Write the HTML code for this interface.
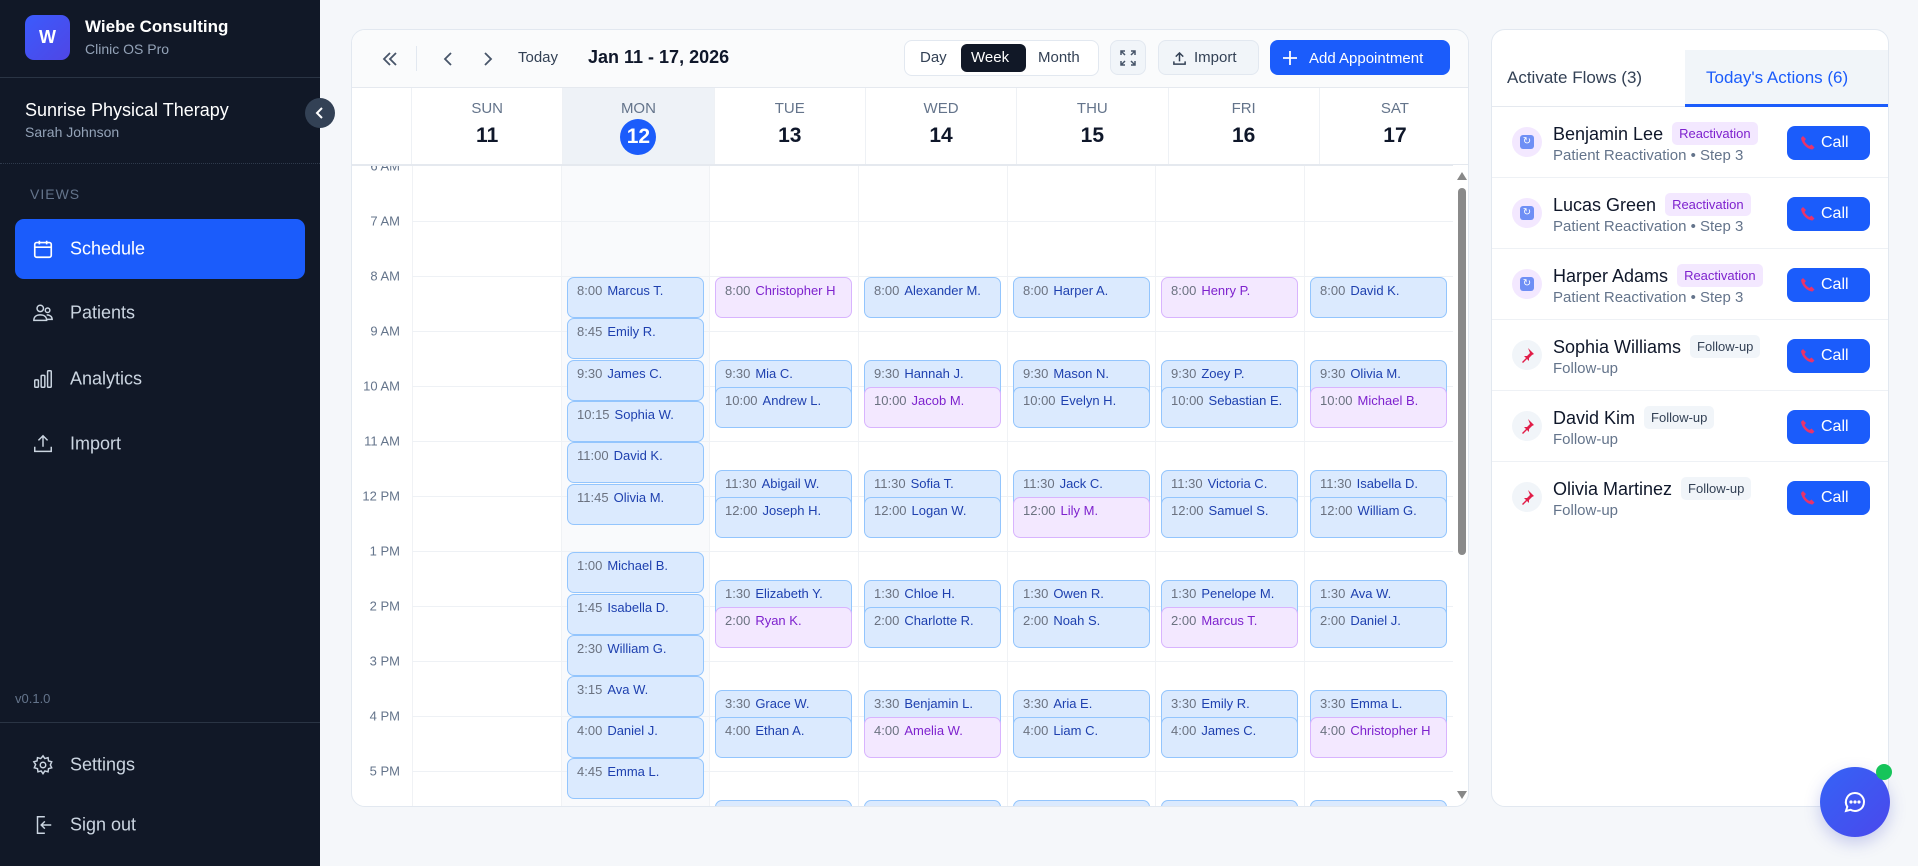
<!DOCTYPE html>
<html><head><meta charset="utf-8">
<style>
*{box-sizing:border-box;margin:0;padding:0}
body{width:1918px;height:866px;overflow:hidden;background:#f5f7fa;font-family:"Liberation Sans",sans-serif;position:relative}
.abs{position:absolute}
#sb{position:absolute;left:0;top:0;width:320px;height:866px;background:#111827}
.nav{position:absolute;left:15px;width:290px;height:60px;border-radius:9px;color:#cbd5e1;font-size:18px}
.nav svg{position:absolute;left:17px;top:50%;transform:translateY(-50%)}
.nav span{position:absolute;left:55px;top:50%;transform:translateY(-50%)}
#cal{position:absolute;left:351px;top:29px;width:1118px;height:778px;background:#fff;border:1px solid #e2e8f0;border-radius:14px;overflow:hidden}
#tb{position:absolute;left:0;top:0;width:100%;height:58px;background:#fafbfc;border-bottom:1px solid #e5e9ef}
.hd{position:absolute;top:58px;height:77px;width:151.3px;text-align:center;border-left:1px solid #eef1f5}
.hd .d{position:absolute;left:0;right:0;top:12px;font-size:15px;color:#64748b}
.hd .n{position:absolute;left:0;right:0;top:36px;font-size:21px;font-weight:bold;color:#0f172a}
#grid{position:absolute;left:0;top:135px;width:1101px;height:643px;overflow:hidden;border-top:1px solid #e5e9ef}
.hl{position:absolute;left:60px;right:0;height:1px;background:#eef1f5}
.vl{position:absolute;top:0;bottom:0;width:1px;background:#f0f2f5}
.tl{position:absolute;left:0;width:48px;text-align:right;font-size:13px;color:#64748b;transform:translateY(-50%)}
.a{position:absolute;width:137px;height:41px;background:#dbeafe;border:1.5px solid #93c5fd;border-radius:7px;padding:5px 0 0 9px;font-size:13px;white-space:nowrap;overflow:hidden;color:#1e40af}
.a i{font-style:normal;color:#6b7280;margin-right:5px}
.a.p{background:#f3e8ff;border-color:#d8b4fe;color:#7e22ce}
.btn{position:absolute;top:10px;height:35px;border-radius:8px;font-size:15px}
#rp{position:absolute;left:1491px;top:29px;width:398px;height:778px;background:#fff;border:1px solid #e2e8f0;border-radius:14px;overflow:hidden}
.row{position:absolute;left:0;width:398px;height:71px;border-bottom:1px solid #eef1f5}
.ic{position:absolute;left:20px;top:20px;width:30px;height:30px;border-radius:50%;background:#f3e8ff}
.nm{position:absolute;left:61px;top:15px;font-size:18px;color:#0f172a;white-space:nowrap}
.bd{display:inline-block;vertical-align:2px;margin-left:9px;font-size:13px;padding:4px 7px;border-radius:5px;background:#f3e8ff;color:#7e22ce}
.bd.f{background:#f1f5f9;color:#334155}
.sub{position:absolute;left:61px;top:40px;font-size:15px;color:#64748b;white-space:nowrap}
.call{position:absolute;left:295px;top:19px;width:83px;height:34px;border-radius:8px;background:#1b5cfb;color:#fff;font-size:16px}
.call span{position:absolute;left:34px;top:8px}
.call svg{position:absolute;left:13px;top:9px}
</style></head><body>

<div id="sb">
  <div class="abs" style="left:25px;top:15px;width:45px;height:45px;border-radius:9px;background:linear-gradient(135deg,#3b5bfd,#4f46e5);color:#fff;font-weight:bold;font-size:18px;text-align:center;line-height:45px">W</div>
  <div class="abs" style="left:85px;top:17px;color:#fff;font-size:17px;font-weight:bold">Wiebe Consulting</div>
  <div class="abs" style="left:85px;top:41px;color:#94a3b8;font-size:14px">Clinic OS Pro</div>
  <div class="abs" style="left:0;top:77px;width:320px;height:1px;background:#2a3444"></div>
  <div class="abs" style="left:25px;top:100px;color:#fff;font-size:18px">Sunrise Physical Therapy</div>
  <div class="abs" style="left:25px;top:124px;color:#94a3b8;font-size:14px">Sarah Johnson</div>
  <div class="abs" style="left:0;top:163px;width:320px;border-top:1px dotted #2f3a4c"></div>
  <div class="abs" style="left:30px;top:186px;color:#64748b;font-size:14px;letter-spacing:1px">VIEWS</div>
  <div class="nav" style="top:219px;background:#1b5cfb;color:#fff">
    <svg width="22" height="22" viewBox="0 0 24 24" fill="none" stroke="#fff" stroke-width="1.8"><rect x="3" y="5" width="18" height="16" rx="2"/><path d="M3 10h18M8 3v4M16 3v4"/></svg><span>Schedule</span></div>
  <div class="nav" style="top:283px">
    <svg width="22" height="22" viewBox="0 0 24 24" fill="none" stroke="#cbd5e1" stroke-width="1.6"><circle cx="9" cy="7" r="3.5"/><circle cx="17" cy="9" r="2.5"/><path d="M2 20c0-4 3-6 7-6s7 2 7 6zM16 14c3 0 6 1.5 6 5h-6"/></svg><span>Patients</span></div>
  <div class="nav" style="top:349px">
    <svg width="22" height="22" viewBox="0 0 24 24" fill="none" stroke="#cbd5e1" stroke-width="1.6"><rect x="3" y="13" width="4" height="8" rx="1"/><rect x="10" y="8" width="4" height="13" rx="1"/><rect x="17" y="3" width="4" height="18" rx="1"/></svg><span>Analytics</span></div>
  <div class="nav" style="top:414px">
    <svg width="22" height="22" viewBox="0 0 24 24" fill="none" stroke="#cbd5e1" stroke-width="1.6"><path d="M12 15V3M7 8l5-5 5 5M3 15v5h18v-5"/></svg><span>Import</span></div>
  <div class="abs" style="left:15px;top:691px;color:#64748b;font-size:13px">v0.1.0</div>
  <div class="abs" style="left:0;top:722px;width:320px;height:1px;background:#2a3444"></div>
  <div class="nav" style="top:735px">
    <svg width="22" height="22" viewBox="0 0 24 24" fill="none" stroke="#cbd5e1" stroke-width="1.6"><circle cx="12" cy="12" r="3"/><path d="M12 2l2 3 3.5-1 .5 3.5 3.5 1-1.5 3.5 1.5 3-3.5 1-.5 3.5-3.5-1-2 3-2-3-3.5 1-.5-3.5-3.5-1 1.5-3.5L2 8.5l3.5-1L6 4l3.5 1z"/></svg><span>Settings</span></div>
  <div class="nav" style="top:795px">
    <svg width="22" height="22" viewBox="0 0 24 24" fill="none" stroke="#cbd5e1" stroke-width="1.6"><path d="M14 3H6v18h8M10 12h11M14 8l-4 4 4 4"/></svg><span>Sign out</span></div>
</div>
<div class="abs" style="left:305px;top:98px;width:30px;height:30px;border-radius:50%;background:#334155;z-index:5">
  <svg width="30" height="30" viewBox="0 0 30 30" fill="none" stroke="#fff" stroke-width="2"><path d="M17 10l-5 5 5 5"/></svg></div>

<div id="cal">
  <div id="tb">
    <svg class="abs" style="left:28px;top:19px" width="20" height="20" viewBox="0 0 20 20" fill="none" stroke="#475569" stroke-width="1.8"><path d="M10 4l-6 6 6 6M16 4l-6 6 6 6"/></svg>
    <div class="abs" style="left:64px;top:16px;width:1px;height:25px;background:#e2e8f0"></div>
    <svg class="abs" style="left:86px;top:19px" width="20" height="20" viewBox="0 0 20 20" fill="none" stroke="#475569" stroke-width="1.8"><path d="M13 4l-6 6 6 6"/></svg>
    <svg class="abs" style="left:126px;top:19px" width="20" height="20" viewBox="0 0 20 20" fill="none" stroke="#475569" stroke-width="1.8"><path d="M7 4l6 6-6 6"/></svg>
    <div class="abs" style="left:166px;top:19px;font-size:15px;color:#334155">Today</div>
    <div class="abs" style="left:236px;top:17px;font-size:18px;color:#0f172a;font-weight:bold">Jan 11 - 17, 2026</div>
    <div class="btn" style="left:552px;width:195px;border:1px solid #e2e8f0;background:#fff;height:36px">
      <span class="abs" style="left:15px;top:8px;color:#334155">Day</span>
      <span class="abs" style="left:56px;top:3px;width:65px;height:28px;border-radius:6px;background:#111827"></span>
      <span class="abs" style="left:66px;top:8px;color:#fff">Week</span>
      <span class="abs" style="left:133px;top:8px;color:#334155">Month</span>
    </div>
    <div class="btn" style="left:758px;width:36px;border:1px solid #e2e8f0;background:#f1f5f9">
      <svg class="abs" style="left:9px;top:9px" width="16" height="16" viewBox="0 0 16 16" fill="none" stroke="#475569" stroke-width="1.5"><path d="M1 5V1h4M11 1h4v4M15 11v4h-4M5 15H1v-4M1 1l4 4M15 1l-4 4M15 15l-4-4M1 15l4-4"/></svg></div>
    <div class="btn" style="left:806px;width:101px;border:1px solid #e2e8f0;background:#f1f5f9">
      <svg class="abs" style="left:13px;top:10px" width="15" height="15" viewBox="0 0 16 16" fill="none" stroke="#334155" stroke-width="1.6"><path d="M8 11V2M4 6l4-4 4 4M2 11v3h12v-3"/></svg>
      <span class="abs" style="left:35px;top:8px;color:#334155">Import</span></div>
    <div class="btn" style="left:918px;width:180px;background:#1b5cfb;color:#fff">
      <svg class="abs" style="left:12px;top:10px" width="16" height="16" viewBox="0 0 16 16" fill="none" stroke="#fff" stroke-width="1.8"><path d="M8 1v14M1 8h14"/></svg>
      <span class="abs" style="left:39px;top:10px">Add Appointment</span></div>
  </div>
  <div class="hd" style="left:59px"><div class="d">SUN</div><div class="n">11</div></div>
  <div class="hd" style="left:210.3px;background:#eef2f7"><div class="d">MON</div><div class="n"><span style="display:inline-block;width:36px;height:36px;line-height:36px;border-radius:50%;background:#1b5cfb;color:#fff;margin-top:-5px">12</span></div></div>
  <div class="hd" style="left:361.6px"><div class="d">TUE</div><div class="n">13</div></div>
  <div class="hd" style="left:512.9px"><div class="d">WED</div><div class="n">14</div></div>
  <div class="hd" style="left:664.2px"><div class="d">THU</div><div class="n">15</div></div>
  <div class="hd" style="left:815.5px"><div class="d">FRI</div><div class="n">16</div></div>
  <div class="hd" style="left:966.8px"><div class="d">SAT</div><div class="n">17</div></div>
  <div class="abs" style="left:0;top:134px;width:1118px;height:1px;background:#e5e9ef"></div>

  <div id="grid">
    <div class="abs" style="left:209px;top:0;width:149px;height:643px;background:#f9fafc"></div>
    <div class="vl" style="left:60px"></div><div class="vl" style="left:209px"></div><div class="vl" style="left:357px"></div><div class="vl" style="left:506px"></div><div class="vl" style="left:655px"></div><div class="vl" style="left:803px"></div><div class="vl" style="left:952px"></div>
    <div class="hl" style="top:55px"></div><div class="hl" style="top:110px"></div><div class="hl" style="top:165px"></div><div class="hl" style="top:220px"></div><div class="hl" style="top:275px"></div><div class="hl" style="top:330px"></div><div class="hl" style="top:385px"></div><div class="hl" style="top:440px"></div><div class="hl" style="top:495px"></div><div class="hl" style="top:550px"></div><div class="hl" style="top:605px"></div>
    <div class="tl" style="top:0">6 AM</div><div class="tl" style="top:55px">7 AM</div><div class="tl" style="top:110px">8 AM</div><div class="tl" style="top:165px">9 AM</div><div class="tl" style="top:220px">10 AM</div><div class="tl" style="top:275px">11 AM</div><div class="tl" style="top:330px">12 PM</div><div class="tl" style="top:385px">1 PM</div><div class="tl" style="top:440px">2 PM</div><div class="tl" style="top:495px">3 PM</div><div class="tl" style="top:550px">4 PM</div><div class="tl" style="top:605px">5 PM</div>

    <div class="a" style="left:215px;top:111px"><i>8:00</i>Marcus T.</div>
    <div class="a" style="left:215px;top:152px"><i>8:45</i>Emily R.</div>
    <div class="a" style="left:215px;top:194px"><i>9:30</i>James C.</div>
    <div class="a" style="left:215px;top:235px"><i>10:15</i>Sophia W.</div>
    <div class="a" style="left:215px;top:276px"><i>11:00</i>David K.</div>
    <div class="a" style="left:215px;top:318px"><i>11:45</i>Olivia M.</div>
    <div class="a" style="left:215px;top:386px"><i>1:00</i>Michael B.</div>
    <div class="a" style="left:215px;top:428px"><i>1:45</i>Isabella D.</div>
    <div class="a" style="left:215px;top:469px"><i>2:30</i>William G.</div>
    <div class="a" style="left:215px;top:510px"><i>3:15</i>Ava W.</div>
    <div class="a" style="left:215px;top:551px"><i>4:00</i>Daniel J.</div>
    <div class="a" style="left:215px;top:592px"><i>4:45</i>Emma L.</div>
    <div class="a p" style="left:363px;top:111px"><i>8:00</i>Christopher H</div>
    <div class="a" style="left:363px;top:194px"><i>9:30</i>Mia C.</div>
    <div class="a" style="left:363px;top:221px"><i>10:00</i>Andrew L.</div>
    <div class="a" style="left:363px;top:304px"><i>11:30</i>Abigail W.</div>
    <div class="a" style="left:363px;top:331px"><i>12:00</i>Joseph H.</div>
    <div class="a" style="left:363px;top:414px"><i>1:30</i>Elizabeth Y.</div>
    <div class="a p" style="left:363px;top:441px"><i>2:00</i>Ryan K.</div>
    <div class="a" style="left:363px;top:524px"><i>3:30</i>Grace W.</div>
    <div class="a" style="left:363px;top:551px"><i>4:00</i>Ethan A.</div>
    <div class="a" style="left:363px;top:634px"><i>5:30</i>Matthew T.</div>
    <div class="a" style="left:512px;top:111px"><i>8:00</i>Alexander M.</div>
    <div class="a" style="left:512px;top:194px"><i>9:30</i>Hannah J.</div>
    <div class="a p" style="left:512px;top:221px"><i>10:00</i>Jacob M.</div>
    <div class="a" style="left:512px;top:304px"><i>11:30</i>Sofia T.</div>
    <div class="a" style="left:512px;top:331px"><i>12:00</i>Logan W.</div>
    <div class="a" style="left:512px;top:414px"><i>1:30</i>Chloe H.</div>
    <div class="a" style="left:512px;top:441px"><i>2:00</i>Charlotte R.</div>
    <div class="a" style="left:512px;top:524px"><i>3:30</i>Benjamin L.</div>
    <div class="a p" style="left:512px;top:551px"><i>4:00</i>Amelia W.</div>
    <div class="a" style="left:512px;top:634px"><i>5:30</i>Lucas G.</div>
    <div class="a" style="left:661px;top:111px"><i>8:00</i>Harper A.</div>
    <div class="a" style="left:661px;top:194px"><i>9:30</i>Mason N.</div>
    <div class="a" style="left:661px;top:221px"><i>10:00</i>Evelyn H.</div>
    <div class="a" style="left:661px;top:304px"><i>11:30</i>Jack C.</div>
    <div class="a p" style="left:661px;top:331px"><i>12:00</i>Lily M.</div>
    <div class="a" style="left:661px;top:414px"><i>1:30</i>Owen R.</div>
    <div class="a" style="left:661px;top:441px"><i>2:00</i>Noah S.</div>
    <div class="a" style="left:661px;top:524px"><i>3:30</i>Aria E.</div>
    <div class="a" style="left:661px;top:551px"><i>4:00</i>Liam C.</div>
    <div class="a" style="left:661px;top:634px"><i>5:30</i>Scarlett K.</div>
    <div class="a p" style="left:809px;top:111px"><i>8:00</i>Henry P.</div>
    <div class="a" style="left:809px;top:194px"><i>9:30</i>Zoey P.</div>
    <div class="a" style="left:809px;top:221px"><i>10:00</i>Sebastian E.</div>
    <div class="a" style="left:809px;top:304px"><i>11:30</i>Victoria C.</div>
    <div class="a" style="left:809px;top:331px"><i>12:00</i>Samuel S.</div>
    <div class="a" style="left:809px;top:414px"><i>1:30</i>Penelope M.</div>
    <div class="a p" style="left:809px;top:441px"><i>2:00</i>Marcus T.</div>
    <div class="a" style="left:809px;top:524px"><i>3:30</i>Emily R.</div>
    <div class="a" style="left:809px;top:551px"><i>4:00</i>James C.</div>
    <div class="a" style="left:809px;top:634px"><i>5:30</i>Sophia W.</div>
    <div class="a" style="left:958px;top:111px"><i>8:00</i>David K.</div>
    <div class="a" style="left:958px;top:194px"><i>9:30</i>Olivia M.</div>
    <div class="a p" style="left:958px;top:221px"><i>10:00</i>Michael B.</div>
    <div class="a" style="left:958px;top:304px"><i>11:30</i>Isabella D.</div>
    <div class="a" style="left:958px;top:331px"><i>12:00</i>William G.</div>
    <div class="a" style="left:958px;top:414px"><i>1:30</i>Ava W.</div>
    <div class="a" style="left:958px;top:441px"><i>2:00</i>Daniel J.</div>
    <div class="a" style="left:958px;top:524px"><i>3:30</i>Emma L.</div>
    <div class="a p" style="left:958px;top:551px"><i>4:00</i>Christopher H</div>
    <div class="a" style="left:958px;top:634px"><i>5:30</i>Mia C.</div>
  </div>
  <svg class="abs" style="left:1104px;top:141px" width="12" height="10" viewBox="0 0 12 10"><path d="M6 1l5 8H1z" fill="#888"/></svg>
  <div class="abs" style="left:1106px;top:158px;width:8px;height:367px;border-radius:4px;background:#8a8a8a"></div>
  <svg class="abs" style="left:1104px;top:760px" width="12" height="10" viewBox="0 0 12 10"><path d="M6 9l5-8H1z" fill="#888"/></svg>
</div>

<div id="rp">
  <div class="abs" style="left:0;top:76px;width:398px;height:1px;background:#e5e9ef"></div>
  <div class="abs" style="left:193px;top:20px;width:205px;height:57px;background:#f1f5f9;border-bottom:3px solid #1b5cfb"></div>
  <div class="abs" style="left:15px;top:38px;font-size:17px;color:#334155">Activate Flows (3)</div>
  <div class="abs" style="left:214px;top:38px;font-size:17px;color:#1b5cfb">Today's Actions (6)</div>

  <div class="row" style="top:77px"><div class="ic"><div class="abs" style="left:8px;top:8px;width:14px;height:14px;border-radius:3px;background:#6f8ff5;color:#fff;font-size:10px;text-align:center;line-height:14px">↻</div></div>
    <div class="nm">Benjamin Lee<span class="bd">Reactivation</span></div><div class="sub">Patient Reactivation • Step 3</div>
    <div class="call"><svg width="16" height="16" viewBox="0 0 16 16"><path d="M3 1l3 3-1.5 2c1 2 3 4 5 5l2-1.5 3 3-2 2C7 14 2 9 1 3z" fill="#e7336b"/></svg><span>Call</span></div></div>
  <div class="row" style="top:148px"><div class="ic"><div class="abs" style="left:8px;top:8px;width:14px;height:14px;border-radius:3px;background:#6f8ff5;color:#fff;font-size:10px;text-align:center;line-height:14px">↻</div></div>
    <div class="nm">Lucas Green<span class="bd">Reactivation</span></div><div class="sub">Patient Reactivation • Step 3</div>
    <div class="call"><svg width="16" height="16" viewBox="0 0 16 16"><path d="M3 1l3 3-1.5 2c1 2 3 4 5 5l2-1.5 3 3-2 2C7 14 2 9 1 3z" fill="#e7336b"/></svg><span>Call</span></div></div>
  <div class="row" style="top:219px"><div class="ic"><div class="abs" style="left:8px;top:8px;width:14px;height:14px;border-radius:3px;background:#6f8ff5;color:#fff;font-size:10px;text-align:center;line-height:14px">↻</div></div>
    <div class="nm">Harper Adams<span class="bd">Reactivation</span></div><div class="sub">Patient Reactivation • Step 3</div>
    <div class="call"><svg width="16" height="16" viewBox="0 0 16 16"><path d="M3 1l3 3-1.5 2c1 2 3 4 5 5l2-1.5 3 3-2 2C7 14 2 9 1 3z" fill="#e7336b"/></svg><span>Call</span></div></div>
  <div class="row" style="top:290px"><div class="ic" style="background:#f1f5f9"><svg class="abs" style="left:7px;top:7px" width="16" height="16" viewBox="0 0 16 16"><path d="M9 1l6 6-2 1-3 3 0 3-2-2-4 4-1-1 4-4-2-2h3l3-3z" fill="#e11d48"/></svg></div>
    <div class="nm">Sophia Williams<span class="bd f">Follow-up</span></div><div class="sub">Follow-up</div>
    <div class="call"><svg width="16" height="16" viewBox="0 0 16 16"><path d="M3 1l3 3-1.5 2c1 2 3 4 5 5l2-1.5 3 3-2 2C7 14 2 9 1 3z" fill="#e7336b"/></svg><span>Call</span></div></div>
  <div class="row" style="top:361px"><div class="ic" style="background:#f1f5f9"><svg class="abs" style="left:7px;top:7px" width="16" height="16" viewBox="0 0 16 16"><path d="M9 1l6 6-2 1-3 3 0 3-2-2-4 4-1-1 4-4-2-2h3l3-3z" fill="#e11d48"/></svg></div>
    <div class="nm">David Kim<span class="bd f">Follow-up</span></div><div class="sub">Follow-up</div>
    <div class="call"><svg width="16" height="16" viewBox="0 0 16 16"><path d="M3 1l3 3-1.5 2c1 2 3 4 5 5l2-1.5 3 3-2 2C7 14 2 9 1 3z" fill="#e7336b"/></svg><span>Call</span></div></div>
  <div class="row" style="top:432px;border-bottom:none"><div class="ic" style="background:#f1f5f9"><svg class="abs" style="left:7px;top:7px" width="16" height="16" viewBox="0 0 16 16"><path d="M9 1l6 6-2 1-3 3 0 3-2-2-4 4-1-1 4-4-2-2h3l3-3z" fill="#e11d48"/></svg></div>
    <div class="nm">Olivia Martinez<span class="bd f">Follow-up</span></div><div class="sub">Follow-up</div>
    <div class="call"><svg width="16" height="16" viewBox="0 0 16 16"><path d="M3 1l3 3-1.5 2c1 2 3 4 5 5l2-1.5 3 3-2 2C7 14 2 9 1 3z" fill="#e7336b"/></svg><span>Call</span></div></div>
</div>

<div class="abs" style="left:1820px;top:767px;width:70px;height:70px;border-radius:50%;background:linear-gradient(135deg,#3563f6,#4a48ec);box-shadow:0 6px 16px rgba(60,70,200,.25)">
  <svg class="abs" style="left:23px;top:23px" width="24" height="24" viewBox="0 0 24 24" fill="none" stroke="#fff" stroke-width="2"><path d="M12 3a9 9 0 1 1-4.5 16.8L3 21l1.3-4.2A9 9 0 0 1 12 3z"/><circle cx="8" cy="12" r=".6" fill="#fff"/><circle cx="12" cy="12" r=".6" fill="#fff"/><circle cx="16" cy="12" r=".6" fill="#fff"/></svg>
</div>
<div class="abs" style="left:1876px;top:764px;width:16px;height:16px;border-radius:50%;background:#16c45a"></div>
</body></html>
